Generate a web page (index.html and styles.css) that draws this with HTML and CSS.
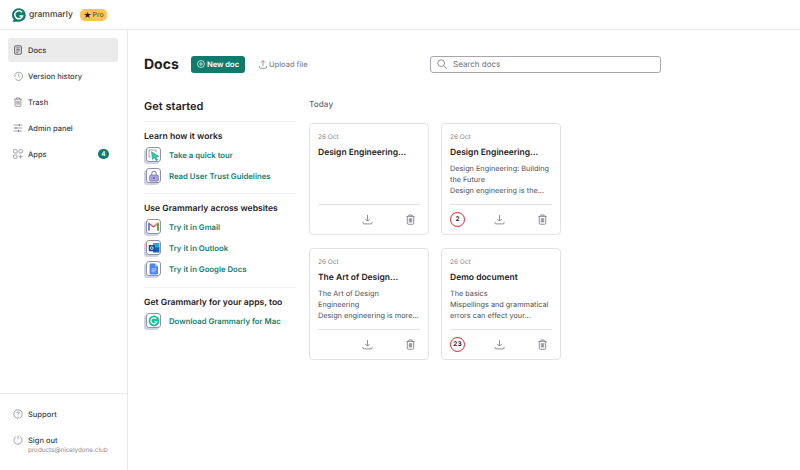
FILE: index.html
```html
<!DOCTYPE html>
<html lang="en">
<head>
<meta charset="utf-8">
<title>Docs</title>
<link rel="stylesheet" href="styles.css">
</head>
<body>
<svg class="defs" width="0" height="0" aria-hidden="true">
  <symbol id="dl" viewBox="0 0 12 12"><path d="M6 1v6.600M3.600 5.400 6 7.800l2.400-2.400M1 8.600v1c0 .8.500 1.200 1.200 1.200h7.600c.7 0 1.200-.4 1.200-1.200v-1" fill="none" stroke="#77797f" stroke-width=".9"/></symbol>
  <symbol id="tr" viewBox="0 0 12 12"><path d="M1.500 2.600h9M4.200 2.400V1.100h3.600v1.300M2.500 2.600v7.600c0 .6.400 1 1 1h5c.6 0 1-.4 1-1V2.600M4.700 4.600v4.600M6 4.600v4.600M7.300 4.600v4.600" fill="none" stroke="#77797f" stroke-width=".9"/></symbol>
</svg>
<header class="topbar">
  <svg class="logo" width="14" height="14" viewBox="0 0 14 14"><path d="M7 .2a6.800 6.800 0 1 1 0 13.600H.4l1.300-2.400A6.800 6.800 0 0 1 7 .2z" fill="#0f7b6c"/><path d="M10 4.400A4 4 0 1 0 10.600 8H7.400" fill="none" stroke="#fff" stroke-width="1.500"/></svg>
  <span class="brand">grammarly</span>
  <span class="pro"><span class="star">★</span>Pro</span>
</header>
<div class="body">
  <aside class="side">
    <nav class="nav">
      <a class="nav-item active">
        <svg class="nav-icon" viewBox="0 0 12 12"><rect x="2" y="1" width="8" height="10" rx="1" fill="none" stroke="#3c3e44"/><path d="M3.800 3.400h4.400M3.800 5.200h4.400M3.800 7h4.400M3.800 8.800h2.600" stroke="#3c3e44" stroke-width=".8"/></svg>
        <span>Docs</span>
      </a>
      <a class="nav-item">
        <svg class="nav-icon" viewBox="0 0 12 12"><path d="M2.200 4.200A4.900 4.900 0 1 1 2.400 9M.6 5l1.700 1.400L3.800 5M6.800 3.400v3l1.800 1" fill="none" stroke="#77797f" stroke-width=".8"/></svg>
        <span>Version history</span>
      </a>
      <a class="nav-item">
        <svg class="nav-icon" viewBox="0 0 12 12"><use href="#tr"/></svg>
        <span>Trash</span>
      </a>
      <a class="nav-item">
        <svg class="nav-icon" viewBox="0 0 12 12"><path d="M.8 2.400h10.400M.8 6h10.400M.8 9.600h10.400" stroke="#77797f" stroke-width=".8"/><path d="M7.500 1v2.800M3.500 4.600v2.800M6.500 8.200V11" stroke="#77797f" stroke-width="1.100"/></svg>
        <span>Admin panel</span>
      </a>
      <a class="nav-item">
        <svg class="nav-icon" viewBox="0 0 12 12"><g fill="none" stroke="#77797f" stroke-width=".8"><rect x=".8" y=".8" width="4" height="4" rx=".8"/><rect x="7.200" y=".8" width="4" height="4" rx=".8"/><rect x=".8" y="7.200" width="4" height="4" rx=".8"/><path d="M9.200 7v4.400M7 9.200h4.400"/></g></svg>
        <span>Apps</span>
        <span class="badge">4</span>
      </a>
    </nav>
    <div class="side-foot">
      <a class="nav-item foot-item">
        <svg class="nav-icon" viewBox="0 0 12 12"><circle cx="6" cy="6" r="4.900" fill="none" stroke="#77797f" stroke-width=".8"/><path d="M4.500 4.700C4.600 3 7.400 3 7.500 4.600c0 1.200-1.500 1.200-1.500 2.400M6 8v.9" fill="none" stroke="#77797f" stroke-width=".8"/></svg>
        <span>Support</span>
      </a>
      <div class="signout">
        <a class="nav-item foot-item">
          <svg class="nav-icon" viewBox="0 0 12 12"><path d="M8.200 1.800a4.900 4.900 0 1 1-4.400 0M6 .6v4.600" fill="none" stroke="#77797f" stroke-width=".8"/></svg>
          <span>Sign out</span>
        </a>
        <div class="email">products@nicelydone.club</div>
      </div>
    </div>
  </aside>
  <main class="main">
    <div class="toolbar">
      <h1 class="title">Docs</h1>
      <button class="new-doc">
        <svg width="8" height="8" viewBox="0 0 8 8"><circle cx="4" cy="4" r="3.500" fill="none" stroke="#fff" stroke-width=".7"/><path d="M4 2v4M2 4h4" stroke="#fff" stroke-width=".7"/></svg>
        New doc
      </button>
      <button class="upload">
        <svg width="8" height="9" viewBox="0 0 8 9"><path d="M4 6V.8M2 2.600 4 .6l2 2M.5 6v1.400c0 .5.300.8.8.8h5.400c.5 0 .8-.3.8-.8V6" fill="none" stroke="#6d6f75" stroke-width=".7"/></svg>
        Upload file
      </button>
      <label class="search">
        <svg width="10" height="10" viewBox="0 0 11 11"><circle cx="4.600" cy="4.600" r="3.700" fill="none" stroke="#77797f" stroke-width=".9"/><path d="m7.400 7.400 3.200 3.200" stroke="#77797f" stroke-width=".9"/></svg>
        <span>Search docs</span>
      </label>
    </div>
    <div class="columns">
      <section class="started">
        <h2 class="started-title">Get started</h2>
        <div class="group">
          <h3 class="group-title">Learn how it works</h3>
          <a class="link">
            <span class="tile"><svg viewBox="0 0 12 12" width="12" height="12"><path d="M1 1h7v2M1 1v7h2" fill="none" stroke="#5f6a86" stroke-width=".6"/><path d="M3.500 2.800 11 7.400 8 8l1.600 3-1.500.6L6.600 8.800 4.500 10.600z" fill="#34c9a7" stroke="#1c8a76" stroke-width=".5"/></svg></span>
            <span>Take a quick tour</span>
          </a>
          <a class="link">
            <span class="tile"><svg viewBox="0 0 12 12" width="12" height="12"><path d="M3.800 5V3.400a2.200 2.200 0 0 1 4.400 0V5" fill="none" stroke="#5f5a90" stroke-width=".8"/><rect x="1.600" y="5" width="8.800" height="6.200" rx="1.200" fill="#a9a4e0" stroke="#5f5a90" stroke-width=".5"/><circle cx="6" cy="8" r=".8" fill="#3a3770"/></svg></span>
            <span>Read User Trust Guidelines</span>
          </a>
        </div>
        <div class="group">
          <h3 class="group-title">Use Grammarly across websites</h3>
          <a class="link">
            <span class="tile"><svg viewBox="0 0 12 10" width="11" height="9"><path d="M1 9.500V1.500L6 5.500 11 1.500v8" fill="none" stroke="#ea4335" stroke-width="1.400"/><path d="M.9 9.500V2" stroke="#4285f4" stroke-width="1.600"/><path d="M11.100 9.500V2" stroke="#34a853" stroke-width="1.600"/><path d="M10.200 1.200 8 3" stroke="#fbbc04" stroke-width="1.400"/></svg></span>
            <span>Try it in Gmail</span>
          </a>
          <a class="link">
            <span class="tile"><svg viewBox="0 0 12 12" width="12" height="12"><rect x="5" y="1" width="6.500" height="5" fill="#28a8ea"/><rect x="5" y="5.500" width="6.500" height="5" fill="#0a64b4"/><rect x=".8" y="3" width="6" height="6.200" rx=".6" fill="#0f4c9a"/><circle cx="3.800" cy="6.100" r="1.400" fill="none" stroke="#fff" stroke-width=".8"/></svg></span>
            <span>Try it in Outlook</span>
          </a>
          <a class="link">
            <span class="tile"><svg viewBox="0 0 10 12" width="10" height="12"><path d="M1.600.6h4.600L9 3.400v7a1 1 0 0 1-1 1H1.600a1 1 0 0 1-1-1V1.600a1 1 0 0 1 1-1z" fill="#4a86f0"/><path d="M6.200.6 9 3.400H6.200z" fill="#a6c5fa"/><path d="M2.600 5.800h4.800M2.600 7.300h4.800M2.600 8.800h3.200" stroke="#dce8fd" stroke-width=".7"/></svg></span>
            <span>Try it in Google Docs</span>
          </a>
        </div>
        <div class="group">
          <h3 class="group-title">Get Grammarly for your apps, too</h3>
          <a class="link">
            <span class="tile"><svg viewBox="0 0 12 12" width="12" height="12"><circle cx="6" cy="6" r="5.400" fill="#15c39a"/><path d="M8.300 4A3 3 0 1 0 8.800 6.800H6.300" fill="none" stroke="#fff" stroke-width="1.100"/></svg></span>
            <span>Download Grammarly for Mac</span>
          </a>
        </div>
      </section>
      <section class="docs">
        <h2 class="docs-title">Today</h2>
        <div class="grid">
          <article class="card">
            <time class="date">26 Oct</time>
            <h3 class="card-title">Design Engineering...</h3>
            <p class="card-text"></p>
            <div class="card-foot">
              <span class="score none"></span>
              <svg class="act" viewBox="0 0 12 12"><use href="#dl"/></svg>
              <svg class="act" viewBox="0 0 12 12"><use href="#tr"/></svg>
            </div>
          </article>
          <article class="card">
            <time class="date">26 Oct</time>
            <h3 class="card-title">Design Engineering...</h3>
            <p class="card-text">Design Engineering: Building<br>the Future<br>Design engineering is the...</p>
            <div class="card-foot">
              <span class="score">2</span>
              <svg class="act" viewBox="0 0 12 12"><use href="#dl"/></svg>
              <svg class="act" viewBox="0 0 12 12"><use href="#tr"/></svg>
            </div>
          </article>
          <article class="card">
            <time class="date">26 Oct</time>
            <h3 class="card-title">The Art of Design...</h3>
            <p class="card-text">The Art of Design<br>Engineering<br>Design engineering is more...</p>
            <div class="card-foot">
              <span class="score none"></span>
              <svg class="act" viewBox="0 0 12 12"><use href="#dl"/></svg>
              <svg class="act" viewBox="0 0 12 12"><use href="#tr"/></svg>
            </div>
          </article>
          <article class="card">
            <time class="date">26 Oct</time>
            <h3 class="card-title">Demo document</h3>
            <p class="card-text">The basics<br>Mispellings and grammatical<br>errors can effect your...</p>
            <div class="card-foot">
              <span class="score">23</span>
              <svg class="act" viewBox="0 0 12 12"><use href="#dl"/></svg>
              <svg class="act" viewBox="0 0 12 12"><use href="#tr"/></svg>
            </div>
          </article>
        </div>
      </section>
    </div>
  </main>
</div>
</body>
</html>
```

FILE: styles.css
```css
* { box-sizing: border-box; }
html, body { margin: 0; height: 100%; }
body {
  width: 800px;
  height: 470px;
  overflow: hidden;
  background: #fff;
  color: #1f2024;
  font-family: Inter, "Liberation Sans", sans-serif;
  text-rendering: geometricPrecision;
  display: flex;
  flex-direction: column;
}
.defs { position: absolute; }
.topbar {
  flex: none;
  height: 30px;
  border-bottom: 1px solid #e8e9ec;
  display: flex;
  align-items: center;
  padding: 0 0 0 12px;
}
.logo { flex: none; margin-right: 3px; }
.brand { font-size: 8.500px; font-weight: 500; color: #3a3b40; width: 51px; }
.pro {
  width: 27px;
  height: 12px;
  border-radius: 5px;
  background: #fbc254;
  font-size: 7px;
  color: #55462a;
  display: flex;
  align-items: center;
  justify-content: center;
  gap: 1px;
}
.star { color: #24211b; font-size: 8px; line-height: 1; }
.body { flex: 1; display: flex; min-height: 0; }
.side {
  flex: none;
  width: 128px;
  border-right: 1px solid #e8e9ec;
  display: flex;
  flex-direction: column;
  justify-content: space-between;
}
.nav { padding: 8px 9px 0 8px; display: flex; flex-direction: column; gap: 2px; }
.nav-item {
  height: 24px;
  border-radius: 3px;
  display: flex;
  align-items: center;
  gap: 5px;
  padding: 0 9px 0 5px;
  font-size: 7.500px;
  font-weight: 500;
  color: #3c3e44;
}
.nav-item.active { background: #ebebeb; color: #33353a; }
.nav-icon { width: 10px; height: 10px; flex: none; }
.badge {
  margin-left: auto;
  width: 11px;
  height: 10px;
  border-radius: 5px;
  background: #0f7b6c;
  color: #fff;
  font-size: 6.500px;
  font-weight: 600;
  display: flex;
  align-items: center;
  justify-content: center;
}
.side-foot {
  height: 77px;
  border-top: 1px solid #e8e9ec;
  padding: 8px 9px 0 8px;
  display: flex;
  flex-direction: column;
  gap: 2px;
}
.email { font-size: 6.300px; color: #8a8c92; margin: -6px 0 0 20px; line-height: 9px; white-space: nowrap; }
.main { flex: 1; padding: 22px 0 0 16px; min-width: 0; }
.toolbar { display: flex; align-items: center; height: 24px; }
.title { margin: 0; width: 47px; flex: none; font-size: 14px; font-weight: 700; color: #1f2024; }
.new-doc {
  width: 54px;
  height: 17px;
  flex: none;
  padding: 0;
  border: 0;
  border-radius: 3px;
  background: #0f7b6c;
  color: #fff;
  font: 600 7.600px Inter, "Liberation Sans", sans-serif;
  text-rendering: geometricPrecision;
  display: flex;
  align-items: center;
  justify-content: center;
  gap: 2px;
}
.upload {
  margin-left: 14px;
  width: 48px;
  flex: none;
  padding: 0;
  border: 0;
  background: none;
  color: #85878d;
  font: 500 7.500px Inter, "Liberation Sans", sans-serif;
  text-rendering: geometricPrecision;
  white-space: nowrap;
  display: flex;
  align-items: center;
  gap: 2px;
}
.upload svg, .new-doc svg, .search svg { flex: none; }
.search {
  margin-left: 123px;
  width: 231px;
  height: 17px;
  flex: none;
  border: 1px solid #a5a7ac;
  border-radius: 3px;
  display: flex;
  align-items: center;
  gap: 6px;
  padding-left: 6px;
  font-size: 8px;
  color: #6f7177;
}
.columns { display: flex; margin-top: 20px; }
.started { width: 152px; flex: none; }
.started-title {
  margin: 0;
  height: 26px;
  padding-top: 3px;
  line-height: 14px;
  font-size: 11px;
  font-weight: 600;
  border-bottom: 1px solid #eef0f2;
}
.group { border-bottom: 1px solid #eef0f2; padding: 10px 0 8px; }
.group:first-of-type { padding-bottom: 7px; }
.group:last-child { border-bottom: 0; }
.group-title { margin: 0 0 1px; font-size: 8.600px; line-height: 11px; font-weight: 600; color: #1f2024; white-space: nowrap; }
.link {
  display: flex;
  align-items: center;
  gap: 8px;
  height: 21px;
  font-size: 7.750px;
  font-weight: 600;
  color: #17806f;
  white-space: nowrap;
}
.tile {
  flex: none;
  width: 15px;
  height: 15px;
  border: 1px solid #8f93a3;
  border-radius: 3px;
  background: #fff;
  box-shadow: -2px 2px 0 #cfd2e6;
  margin-left: 2px;
  display: flex;
  align-items: center;
  justify-content: center;
}
.docs { margin-left: 13px; width: 252px; }
.docs-title { margin: 0; height: 27px; padding-top: 2px; font-size: 8.250px; line-height: 12px; font-weight: 500; color: #6b6d73; }
.grid { display: grid; grid-template-columns: 120px 120px; column-gap: 12px; row-gap: 13px; }
.card {
  height: 112px;
  border: 1px solid #e2e3e6;
  border-radius: 4px;
  padding: 9px 8px 0;
  display: flex;
  flex-direction: column;
}
.date { font-size: 6.500px; line-height: 9px; color: #85878d; display: block; }
.card-title { margin: 5px 0 0; font-size: 8.500px; line-height: 12px; font-weight: 600; color: #1f2024; white-space: nowrap; }
.card-text { margin: 3.500px 0 0; height: 34px; font-size: 7.300px; line-height: 11.300px; color: #4e5056; white-space: nowrap; }
.card-foot {
  margin: 7px 0 0;
  height: 30px;
  border-top: 1px solid #e2e3e6;
  display: flex;
  align-items: center;
}
.score {
  width: 15px;
  height: 15px;
  flex: none;
  border: 1.500px solid #e8202a;
  border-radius: 50%;
  font-size: 6.500px;
  font-weight: 700;
  color: #2a2b2f;
  display: flex;
  align-items: center;
  justify-content: center;
}
.score.none { border: 0; }
.act { width: 11px; height: 11px; flex: none; }
.act:nth-child(2) { margin-left: 29px; }
.act:nth-child(3) { margin-left: 32px; }
```
